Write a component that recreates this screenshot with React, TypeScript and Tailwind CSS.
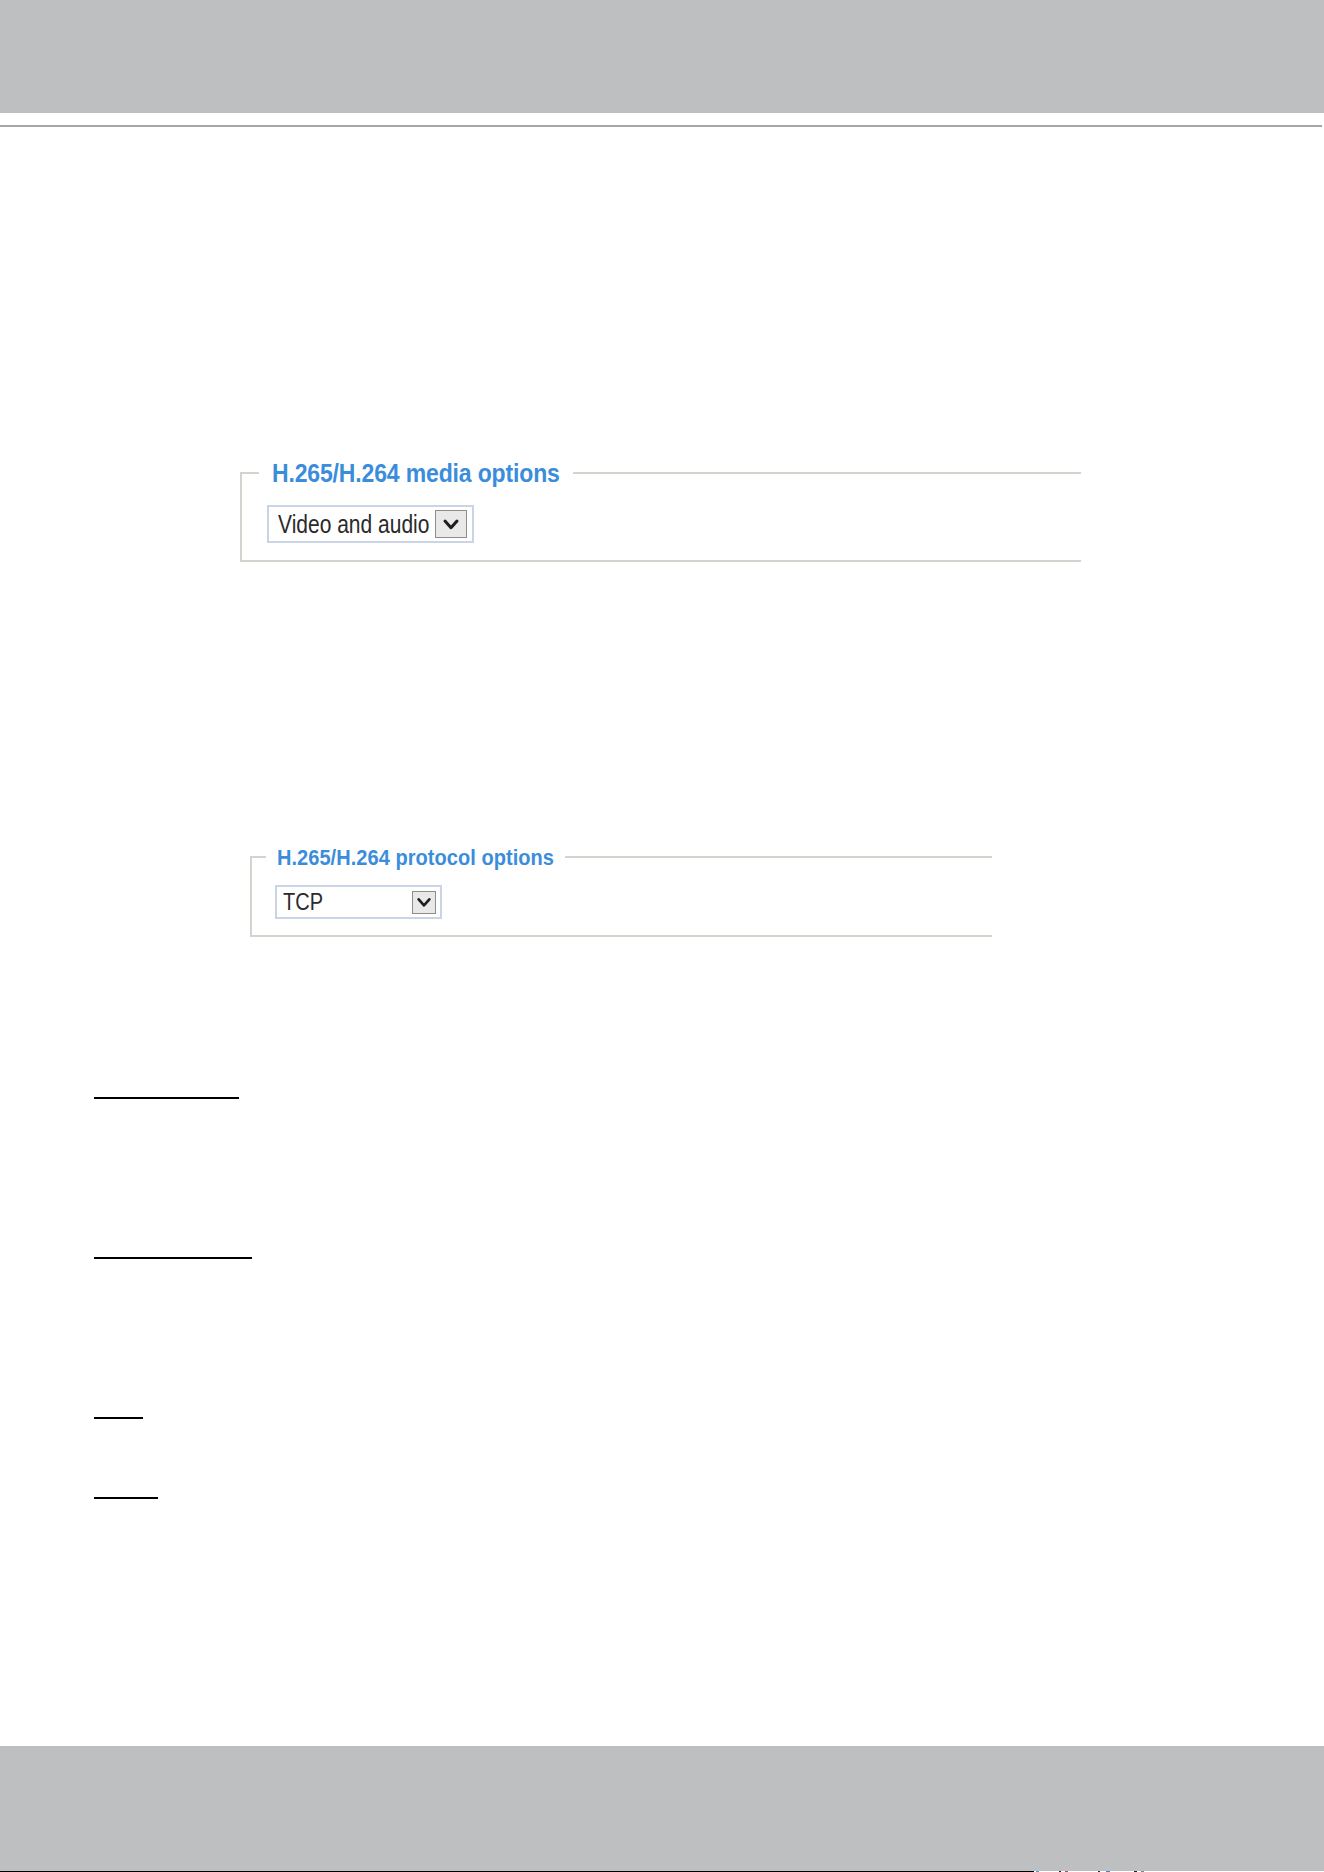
function Chevron({ size }: { size: number }) {
  return (
    <svg width={size} height={size} viewBox="0 0 12 12" fill="none">
      <polyline points="2,4 6,8.5 10,4" stroke="#1e1e1e" strokeWidth="2" strokeLinecap="round" strokeLinejoin="round" />
    </svg>
  );
}

export default function App() {
  const rules = [
    { w: 'w-[145px]', mt: 'mt-[160px]' },
    { w: 'w-[158px]', mt: 'mt-[158px]' },
    { w: 'w-[49px]', mt: 'mt-[158px]' },
    { w: 'w-[64px]', mt: 'mt-[78px]' },
  ];

  return (
    <div className="w-[1324px] h-[1872px] bg-white flex flex-col font-['Liberation_Sans',Arial,sans-serif]">
      <div className="h-[113px] bg-[#bebfc1]"></div>
      <div className="mt-[12px] h-[2px] w-[1322px] bg-[#a6a6a6]"></div>

      {/* media options */}
      <fieldset className="mt-[333px] ml-[240px] w-[841px] border-2 border-r-0 border-[#d6d3cc] pl-[17px] pb-[17px]">
        <legend className="px-[13px] leading-[26px] text-[23px] font-bold tracking-[-0.15px] text-[#3b8ddb]">
          <span className="inline-block scale-y-[1.12]">H.265/H.264 media options</span>
        </legend>
        <div className="mt-[19px] ml-[8px] flex h-[38px] w-[207px] items-center justify-between border-2 border-[#cad4e4] pl-[9px] pr-[5px]">
          <span className="inline-block scale-y-[1.2] text-[21px] leading-none text-[#2a2a2a]">Video and audio</span>
          <div className="flex h-[28px] w-[32px] items-center justify-center border border-[#8c8c8c] bg-[#e9e9e9]">
            <Chevron size={18} />
          </div>
        </div>
      </fieldset>

      {/* protocol options */}
      <fieldset className="mt-[283px] ml-[250px] w-[742px] border-2 border-r-0 border-[#d6d3cc] pl-[14px] pb-[16px]">
        <legend className="px-[11px] leading-[24px] text-[20px] font-bold tracking-[0.05px] text-[#3b8ddb]">
          <span className="inline-block scale-y-[1.12]">H.265/H.264 protocol options</span>
        </legend>
        <div className="mt-[16px] ml-[9px] flex h-[34px] w-[167px] items-center justify-between border-2 border-[#cad4e4] pl-[6px] pr-[4px]">
          <span className="inline-block scale-y-[1.15] text-[20px] leading-none text-[#2a2a2a]">TCP</span>
          <div className="flex h-[23px] w-[24px] items-center justify-center border border-[#8c8c8c] bg-[#e9e9e9]">
            <Chevron size={16} />
          </div>
        </div>
      </fieldset>

      {rules.map((r, i) => (
        <div key={i} className={`${r.mt} ml-[94px] h-[2px] ${r.w} bg-black`}></div>
      ))}

      <div className="mt-[247px] h-[125px] bg-[#bebfc1]"></div>
      <div className="flex h-[1px] items-stretch">
        <div className="w-[1034px] bg-black"></div>
        <div className="ml-[2px] w-[3px] bg-[#4aa3d8]"></div>
        <div className="ml-[20px] w-[2px] bg-[#222]"></div>
        <div className="ml-[4px] w-[3px] bg-[#c05050]"></div>
        <div className="ml-[30px] w-[2px] bg-[#333]"></div>
        <div className="ml-[6px] w-[4px] bg-[#5080c0]"></div>
        <div className="ml-[24px] w-[3px] bg-[#222]"></div>
        <div className="ml-[4px] w-[3px] bg-[#a070a0]"></div>
      </div>
    </div>
  );
}
